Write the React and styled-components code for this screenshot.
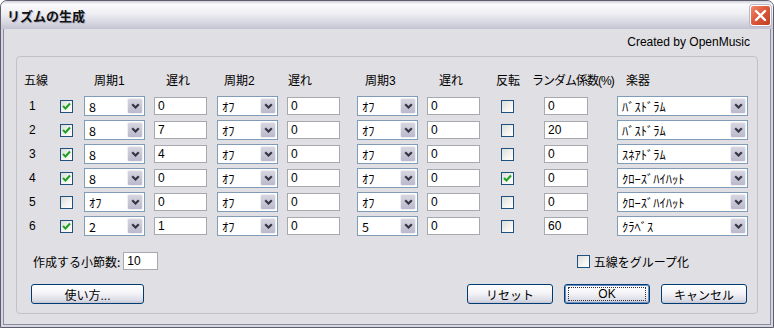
import React from 'react';
import styled, { createGlobalStyle } from 'styled-components';

const GlobalStyle = createGlobalStyle`
  html, body {
    margin: 0;
    padding: 0;
    background: #ffffff;
  }
  body {
    font-family: "Liberation Sans", "Noto Sans CJK JP", sans-serif;
    font-size: 12px;
    color: #000;
  }
`;

const Window = styled.div`
  width: 774px;
  height: 328px;
  box-sizing: border-box;
  border: 1px solid #5d5d6d;
  border-radius: 7px 7px 0 0;
  background: #d6d6e0;
  display: flex;
  flex-direction: column;
  overflow: hidden;
`;

const TitleBar = styled.div`
  height: 28px;
  flex: none;
  display: flex;
  align-items: center;
  justify-content: space-between;
  padding: 0 2px 0 6px;
  background: linear-gradient(#cfcfda 0%, #fbfbfd 12%, #eeeef3 45%, #d9d9e3 75%, #c3c3d2 100%);
`;

const Title = styled.span`
  font-family: "Noto Sans CJK JP", sans-serif;
  font-weight: 700;
  font-size: 13px;
  color: #111;
  text-shadow: 1px 1px 0 #b8b8c8;
`;

const CloseButton = styled.button`
  width: 21px;
  height: 21px;
  padding: 0;
  border: 1px solid #ffffff;
  border-radius: 3px;
  background: linear-gradient(135deg, #f08b70 0%, #dd5a3c 45%, #c13d22 100%);
  box-shadow: 0 0 0 1px #b8b8c8;
  display: flex;
  align-items: center;
  justify-content: center;
`;

const Frame = styled.div`
  flex: 1;
  padding: 0 2px 2px 2px;
  display: flex;
`;

const Client = styled.div`
  flex: 1;
  border: 1px solid #8b8ba2;
  border-top: none;
  background: #e0dfe3;
  padding: 6px 12px 10px 12px;
  display: flex;
  flex-direction: column;
`;

const Credit = styled.div`
  height: 14px;
  line-height: 14px;
  text-align: right;
  padding-right: 8px;
  margin-bottom: 7px;
`;

const GroupBox = styled.div`
  flex: 1;
  border: 1px solid #c2c2c6;
  border-radius: 4px;
  padding: 16px 8px 0 7px;
  display: flex;
  flex-direction: column;
`;

const Grid = styled.div`
  display: grid;
  grid-template-columns: 36px 24px 70px 63px 70px 70px 70px 69px 36px 85px 131px;
  grid-template-rows: 21px;
  grid-auto-rows: 24px;
  align-items: center;
`;

const HeadCell = styled.div`
  padding-left: ${p => p.$indent || 0}px;
  letter-spacing: ${p => (p.$tight ? '-1px' : '0')};
  align-self: start;
  line-height: 16px;
  white-space: nowrap;
`;

const Cell = styled.div`
  padding-left: ${p => p.$indent || 0}px;
  display: flex;
  align-items: center;
`;

const RowNum = styled.span`
  padding-left: 5px;
`;

const BoxWrap = styled.span`
  width: 13px;
  height: 13px;
  box-sizing: border-box;
  border: 1px solid #1c5180;
  background: linear-gradient(135deg, #dcdcd7 0%, #f4f4f2 60%, #ffffff 100%);
  display: inline-flex;
  align-items: center;
  justify-content: center;
  flex: none;
`;

const Check = ({ on }) => (
  <BoxWrap>
    {on && (
      <svg width="9" height="9" viewBox="0 0 9 9">
        <path d="M1 4 L3.5 6.5 L8 1.5" fill="none" stroke="#21a121" strokeWidth="2" />
      </svg>
    )}
  </BoxWrap>
);

const ComboBox = styled.div`
  width: ${p => p.$w}px;
  height: 20px;
  box-sizing: border-box;
  border: 1px solid #7f9db9;
  background: #fff;
  padding: 1px;
  display: flex;
  align-items: stretch;
`;

const ComboText = styled.span`
  flex: 1;
  display: flex;
  align-items: center;
  padding-left: 3px;
  font-family: "Noto Sans CJK JP", sans-serif;
  font-size: 12.5px;
  white-space: nowrap;
`;

const DropButton = styled.span`
  width: 16px;
  flex: none;
  box-sizing: border-box;
  border: 1px solid #eeeef4;
  border-radius: 2px;
  background: linear-gradient(#d6d6e2, #b9b9cc);
  display: flex;
  align-items: center;
  justify-content: center;
`;

const Combo = ({ w, value }) => (
  <ComboBox $w={w}>
    <ComboText>{value}</ComboText>
    <DropButton>
      <svg width="9" height="6" viewBox="0 0 9 6">
        <path d="M1.2 1.2 L4.5 4.5 L7.8 1.2" fill="none" stroke="#363644" strokeWidth="2.2" />
      </svg>
    </DropButton>
  </ComboBox>
);

const TextBox = styled.div`
  width: ${p => p.$w}px;
  height: 18px;
  box-sizing: border-box;
  border: 1px solid #a7a9b0;
  background: #fff;
  padding-left: 3px;
  line-height: 16px;
`;

const Footer = styled.div`
  display: flex;
  align-items: center;
  height: 22px;
  margin-top: 12px;
`;

const FooterLabel = styled.span`
  margin-left: 9px;
  margin-right: 3px;
  font-family: "Noto Sans CJK JP", sans-serif;
`;

const GroupToggle = styled.label`
  margin-left: auto;
  margin-right: 60px;
  display: flex;
  align-items: center;
  gap: 4px;
  font-family: "Noto Sans CJK JP", sans-serif;
`;

const ButtonRow = styled.div`
  display: flex;
  align-items: center;
  margin-top: 12px;
  padding: 0 2px 0 7px;
  gap: 11px;
`;

const Button = styled.button`
  width: ${p => p.$w}px;
  height: 20px;
  box-sizing: border-box;
  padding: 0;
  border: 1px solid #003c74;
  border-radius: 3px;
  background: linear-gradient(#ffffff 0%, #f4f4f8 45%, #dcdce6 85%, #c6c6d4 100%);
  font-family: "Liberation Sans", "Noto Sans CJK JP", sans-serif;
  font-size: 12px;
  color: #000;
  margin-left: ${p => (p.$push ? 'auto' : '0')};
  box-shadow: ${p => (p.$default ? 'inset 0 0 0 1px #6a8fc8' : 'none')};
  display: flex;
  align-items: center;
  justify-content: center;
`;

const Focus = styled.span`
  width: calc(100% - 6px);
  height: 14px;
  box-sizing: border-box;
  border: 1px dotted #333;
  display: flex;
  align-items: center;
  justify-content: center;
`;

const rows = [
  { on: true, p1: '8', d1: '0', p2: 'ｵﾌ', d2: '0', p3: 'ｵﾌ', d3: '0', rev: false, rnd: '0', inst: 'ﾊﾞｽﾄﾞﾗﾑ' },
  { on: true, p1: '8', d1: '7', p2: 'ｵﾌ', d2: '0', p3: 'ｵﾌ', d3: '0', rev: false, rnd: '20', inst: 'ﾊﾞｽﾄﾞﾗﾑ' },
  { on: true, p1: '8', d1: '4', p2: 'ｵﾌ', d2: '0', p3: 'ｵﾌ', d3: '0', rev: false, rnd: '0', inst: 'ｽﾈｱﾄﾞﾗﾑ' },
  { on: true, p1: '8', d1: '0', p2: 'ｵﾌ', d2: '0', p3: 'ｵﾌ', d3: '0', rev: true, rnd: '0', inst: 'ｸﾛｰｽﾞﾊｲﾊｯﾄ' },
  { on: false, p1: 'ｵﾌ', d1: '0', p2: 'ｵﾌ', d2: '0', p3: 'ｵﾌ', d3: '0', rev: false, rnd: '0', inst: 'ｸﾛｰｽﾞﾊｲﾊｯﾄ' },
  { on: true, p1: '2', d1: '1', p2: 'ｵﾌ', d2: '0', p3: '5', d3: '0', rev: false, rnd: '60', inst: 'ｸﾗﾍﾞｽ' },
];

const headers = [
  ['五線', 0], ['', 0], ['周期1', 10], ['遅れ', 12], ['周期2', 7], ['遅れ', 1],
  ['周期3', 8], ['遅れ', 12], ['反転', 0], ['ランダム係数(%)', 0, true], ['楽器', 9],
];

export default function App() {
  return (
    <>
      <GlobalStyle />
      <Window>
        <TitleBar>
          <Title>リズムの生成</Title>
          <CloseButton aria-label="close">
            <svg width="13" height="13" viewBox="0 0 13 13">
              <path d="M2 2 L11 11 M11 2 L2 11" stroke="#fff" strokeWidth="2.4" strokeLinecap="round" />
            </svg>
          </CloseButton>
        </TitleBar>
        <Frame>
          <Client>
            <Credit>Created by OpenMusic</Credit>
            <GroupBox>
              <Grid>
                {headers.map(([t, i, tight], k) => (
                  <HeadCell key={k} $indent={i} $tight={tight}>{t}</HeadCell>
                ))}
                {rows.map((r, n) => (
                  <React.Fragment key={n}>
                    <Cell><RowNum>{n + 1}</RowNum></Cell>
                    <Cell><Check on={r.on} /></Cell>
                    <Cell><Combo w={61} value={r.p1} /></Cell>
                    <Cell><TextBox $w={53}>{r.d1}</TextBox></Cell>
                    <Cell><Combo w={61} value={r.p2} /></Cell>
                    <Cell><TextBox $w={53}>{r.d2}</TextBox></Cell>
                    <Cell><Combo w={61} value={r.p3} /></Cell>
                    <Cell><TextBox $w={53}>{r.d3}</TextBox></Cell>
                    <Cell $indent={5}><Check on={r.rev} /></Cell>
                    <Cell $indent={12}><TextBox $w={44}>{r.rnd}</TextBox></Cell>
                    <Cell><Combo w={131} value={r.inst} /></Cell>
                  </React.Fragment>
                ))}
              </Grid>
              <Footer>
                <FooterLabel>作成する小節数:</FooterLabel>
                <TextBox $w={35}>10</TextBox>
                <GroupToggle>
                  <Check on={false} />
                  五線をグループ化
                </GroupToggle>
              </Footer>
              <ButtonRow>
                <Button $w={113}>使い方...</Button>
                <Button $w={86} $push>リセット</Button>
                <Button $w={86} $default><Focus>OK</Focus></Button>
                <Button $w={86}>キャンセル</Button>
              </ButtonRow>
            </GroupBox>
          </Client>
        </Frame>
      </Window>
    </>
  );
}
